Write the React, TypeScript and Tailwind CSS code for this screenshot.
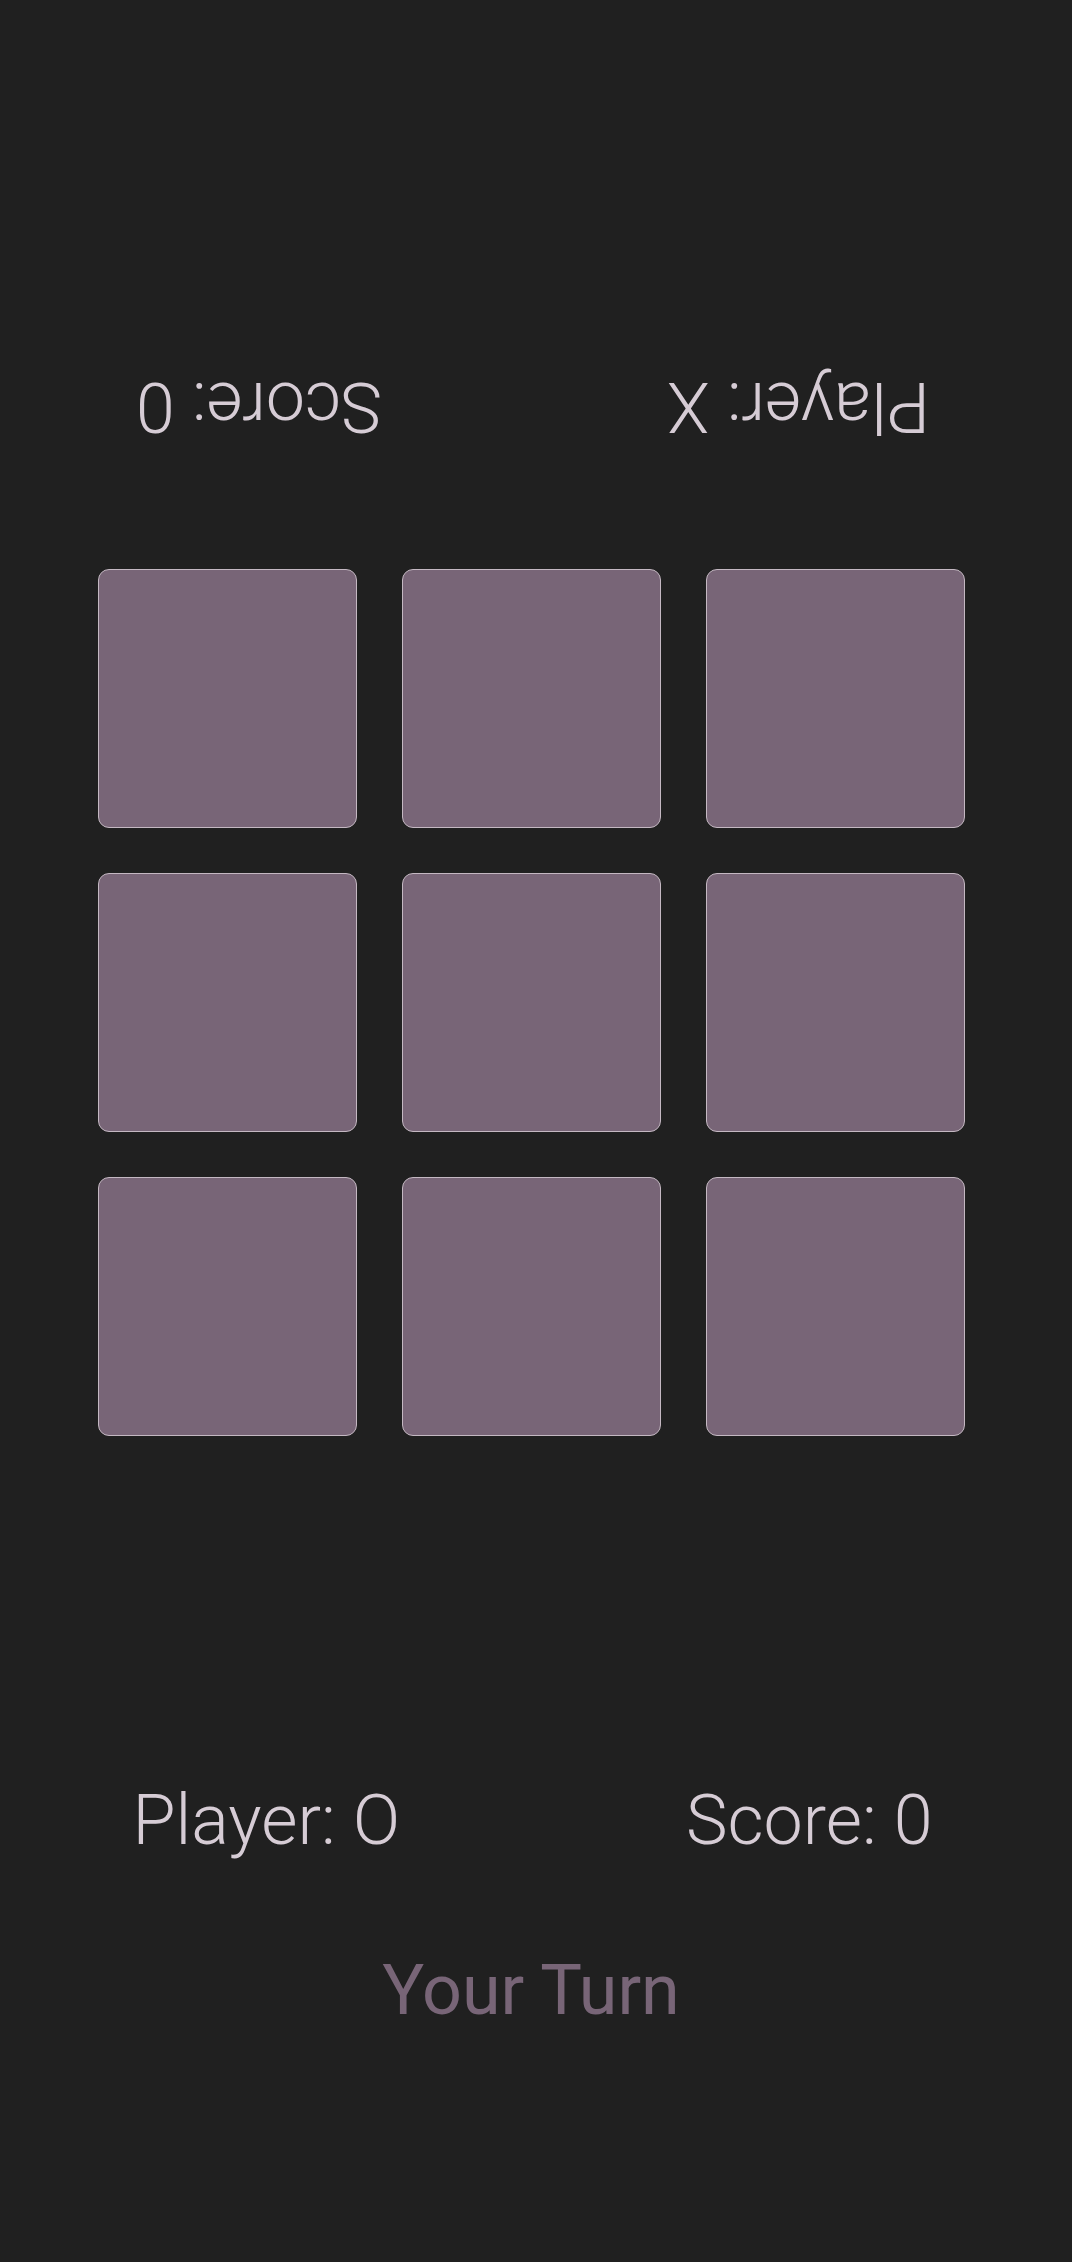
export default function App() {
  const cells = Array.from({ length: 9 })

  return (
    <div className="min-h-screen bg-[#202020] font-['Roboto',sans-serif]">
      <div className="w-[1062px] flex flex-col items-center pt-[366px]">
        {/* opponent's bar, upside down */}
        <div className="w-[867px] flex justify-between pl-[35px] pr-[38px] rotate-180 text-[70px] leading-[82px] font-light text-[#d6ccd5]">
          <span>Player: X</span>
          <span>Score: 0</span>
        </div>

        <div className="mt-[121px] w-[867px] grid grid-cols-3 gap-[45px]">
          {cells.map((_, i) => (
            <button
              key={i}
              className="h-[259px] rounded-[11px] border border-[#c4b8c2] bg-[#786577]"
            />
          ))}
        </div>

        <div className="mt-[343px] w-[867px] flex justify-between pl-[35px] pr-[32px] text-[70px] leading-[82px] font-light text-[#d6ccd5]">
          <span>Player: O</span>
          <span>Score: 0</span>
        </div>

        <div className="mt-[88px] text-[70px] leading-[82px] text-[#786577]">Your Turn</div>
      </div>
    </div>
  )
}
